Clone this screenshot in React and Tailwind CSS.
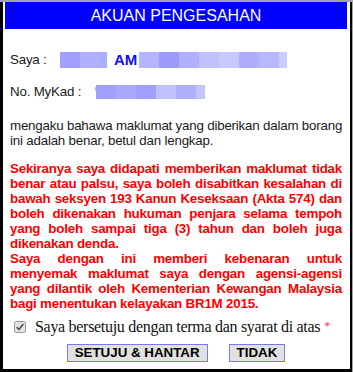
import React from 'react';

const nameBlocksA = [
  'w-[20px] bg-[#a0a0ff]',
  'w-[20px] bg-[#b0b0ff]',
  'w-[7px] bg-[#a8b0ff]',
];

const nameBlocksB = [
  'w-[20px] bg-[#b4b4ff]',
  'w-[20px] bg-[#9c9cff]',
  'w-[20px] bg-[#b0b0ff]',
  'w-[20px] bg-[#c0c0ff]',
  'w-[20px] bg-[#c8c8ff]',
  'w-[20px] bg-[#b0acff]',
  'w-[20px] bg-[#b8b8ff]',
  'w-[8px] bg-[#c8ccff]',
];

const idBlocks = [
  'w-[20px] bg-[#a0a0ff]',
  'w-[20px] bg-[#a8a8ff]',
  'w-[20px] bg-[#a0a0ff]',
  'w-[20px] bg-[#c0c0ff]',
  'w-[20px] bg-[#b0b0ff]',
  'w-[9px] bg-[#c0c4ff]',
];

// lines as they break in the form; all but the last of each block are justified
const warning = [
  'Sekiranya saya didapati memberikan maklumat tidak',
  'benar atau palsu, saya boleh disabitkan kesalahan di',
  'bawah seksyen 193 Kanun Keseksaan (Akta 574) dan',
  'boleh dikenakan hukuman penjara selama tempoh',
  'yang boleh sampai tiga (3) tahun dan boleh juga',
];

const consent = [
  'Saya dengan ini memberi kebenaran untuk',
  'menyemak maklumat saya dengan agensi-agensi',
  'yang dilantik oleh Kementerian Kewangan Malaysia',
];

function Blur({ blocks, h }) {
  return (
    <div className={`flex ${h}`}>
      {blocks.map((b, i) => (
        <div key={i} className={`h-full ${b}`} />
      ))}
    </div>
  );
}

function Line({ children, last }) {
  return (
    <div className={`whitespace-nowrap ${last ? 'text-left' : 'text-justify [text-align-last:justify]'}`}>
      {children}
    </div>
  );
}

export default function App() {
  return (
    <div className="w-[353px] h-[372px] bg-[#a4a4a4] overflow-hidden font-['Liberation_Sans',Arial,sans-serif]">
      <div className="w-[352px] h-[370px] bg-white border-l-[3px] border-r-2 border-b-[3px] border-black">
        <div className="mt-[2px] ml-[2px] mr-[3px] h-[27px] bg-[#0000ff] text-white text-[16px] leading-[27px] text-center">
          AKUAN PENGESAHAN
        </div>

        <div className="pl-[7px] pr-[8px] text-[13.33px] tracking-[-0.2px] text-[#1a1a1a]">
          <div className="mt-[23px] h-[16px] flex items-center">
            <span className="w-[50px]">Saya :</span>
            <Blur blocks={nameBlocksA} h="h-[16px]" />
            <span className="ml-[7px] mr-[2px] text-[15px] tracking-normal font-bold text-[#1010e8]">AM</span>
            <Blur blocks={nameBlocksB} h="h-[16px]" />
          </div>

          <div className="mt-[17px] h-[14px] flex items-center">
            <span className="w-[85px]">No. MyKad :</span>
            <span className="w-[1px] h-[4px] bg-[#f0a0f0] self-start mt-[2px]" />
            <Blur blocks={idBlocks} h="h-[14px]" />
          </div>

          <div className="mt-[19px] leading-[15px]">
            <Line>mengaku bahawa maklumat yang diberikan dalam borang</Line>
            <Line last>ini adalah benar, betul dan lengkap.</Line>
          </div>

          <div className="mt-[13px] leading-[15px] font-bold text-[#ff0000]">
            {warning.map((l) => (
              <Line key={l}>{l}</Line>
            ))}
            <Line last>dikenakan denda.</Line>
            {consent.map((l) => (
              <Line key={l}>{l}</Line>
            ))}
            <Line last>bagi menentukan kelayakan BR1M 2015.</Line>
          </div>

          <div className="mt-[7px] h-[18px] flex items-center whitespace-nowrap font-['Liberation_Serif','Times_New_Roman',serif] text-[16px] tracking-[-0.3px] leading-[18px] text-[#111]">
            <div className="ml-[4px] mr-[9px] w-[12px] h-[12px] rounded-[2px] border border-[#9a9a9a] bg-[#e4e4e4] flex items-center justify-center">
              <svg viewBox="0 0 12 12" className="w-[10px] h-[10px]">
                <path d="M2 6.2 L4.8 9 L10 2.5" fill="none" stroke="#555" strokeWidth="2" />
              </svg>
            </div>
            <span>Saya bersetuju dengan terma dan syarat di atas</span>
            <span className="ml-[4px] text-[#ff2a4a] text-[12px] self-start -mt-[1px]">*</span>
          </div>

          <div className="mt-[8px] flex justify-center gap-[21px] font-bold text-[13.33px] tracking-normal text-black">
            <button className="h-[18px] px-[7px] leading-[16px] bg-[#e1e1e1] border border-[#7a78f0]">
              SETUJU &amp; HANTAR
            </button>
            <button className="h-[18px] px-[7px] leading-[16px] bg-[#e1e1e1] border border-[#7a78f0]">
              TIDAK
            </button>
          </div>
        </div>
      </div>
    </div>
  );
}
